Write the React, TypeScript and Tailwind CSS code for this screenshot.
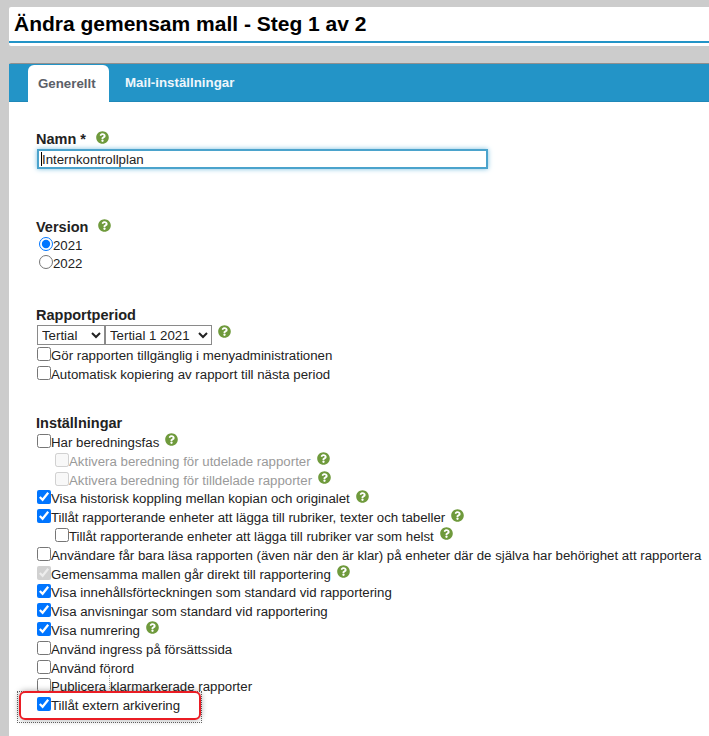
import React from "react";
import { FaQuestionCircle } from "react-icons/fa";

const Help = ({ className = "" }: { className?: string }) => (
  <FaQuestionCircle className={`inline-block text-[#6f9a3c] w-[13px] h-[13px] shrink-0 ${className}`} />
);

type RowProps = {
  label: string;
  checked?: boolean;
  disabled?: boolean;
  muted?: boolean;
  indent?: boolean;
  help?: boolean;
  raised?: boolean;
};

const Row = ({ label, checked, disabled, muted, indent, help, raised }: RowProps) => (
  <label
    className={`flex items-center h-[18.8px] whitespace-nowrap ${indent ? "pl-[18px]" : ""} ${raised ? "relative z-10" : ""}`}
  >
    <input
      type="checkbox"
      defaultChecked={checked}
      disabled={disabled}
      className="m-0 ml-[1px] w-[14px] h-[14px] shrink-0 -translate-y-[2px]"
    />
    <span className={muted ? "text-[#9a9a9a]" : ""}>{label}</span>
    {help && <Help className="ml-[6px] -translate-y-[3px]" />}
  </label>
);

const Heading = ({ children, help }: { children: React.ReactNode; help?: boolean }) => (
  <div className="flex items-center h-[18px] font-bold text-[14.5px] text-[#222]">
    <span>{children}</span>
    {help && <Help className="ml-[10px] -translate-y-[3px]" />}
  </div>
);

export default function App() {
  return (
    <div className="relative w-[709px] h-[736px] overflow-hidden bg-[#cccccc] pl-[9px] pt-[7px] font-['Liberation_Sans',Arial,sans-serif] text-[13.26px] text-[#222]">
      <header className="h-[39px] bg-white rounded-l-[2px] pt-[2px]">
        <h1 className="h-[32px] pl-[5px] text-[21px] leading-[30px] font-bold text-black">
          Ändra gemensam mall - Steg 1 av 2
        </h1>
        <div className="h-[2px] bg-[#2394c7]" />
      </header>

      <main className="mt-[17px] h-[680px] bg-white rounded-tl-[2px] border-t border-[#8f8f8f]">
        <nav className="flex h-[38px] bg-[#2394c7] pl-[19px] pt-[1px] border-b border-[#1f88b8]">
          <div className="w-[81px] h-[37px] bg-white rounded-t-[6px] text-[#5b6068] flex items-center pl-[10px] font-bold text-[13.3px]">
            Generellt
          </div>
          <div className="ml-[16px] h-[36px] flex items-center font-bold text-[13.3px] text-[#eef6fb]">
            Mail-inställningar
          </div>
        </nav>

        <section className="pl-[27px] pt-[29px]">
          <Heading help>Namn *</Heading>
          <div className="relative w-[451px] h-[20px] ml-[1px]">
            <input
              readOnly
              value="Internkontrollplan"
              className="w-full h-full pl-[3px] border-2 border-[#4ba3cc] bg-white text-[#222] shadow-[0_0_5px_#7cc0e0] outline-none text-[13.26px]"
            />
            <span className="absolute left-[4px] top-[3px] w-[1px] h-[14px] bg-black" />
          </div>

          <div className="mt-[50px]">
            <Heading help>Version</Heading>
          </div>
          <div className="flex flex-col">
            <label className="flex items-center h-[18px]">
              <input type="radio" name="version" defaultChecked className="m-0 ml-[3px] w-[14px] h-[14px] -translate-y-[2px]" />
              <span>2021</span>
            </label>
            <label className="flex items-center h-[18px]">
              <input type="radio" name="version" className="m-0 ml-[3px] w-[14px] h-[14px] -translate-y-[2px]" />
              <span>2022</span>
            </label>
          </div>

          <div className="mt-[34px]">
            <Heading>Rapportperiod</Heading>
          </div>
          <div className="flex items-center h-[20px] mb-[2px] pl-[1px]">
            <select defaultValue="Tertial" className="w-[68px] h-[20px] border border-[#8a8a8a] bg-white text-[13.26px]">
              <option>Tertial</option>
            </select>
            <select defaultValue="Tertial 1 2021" className="w-[107px] h-[20px] border border-[#8a8a8a] bg-white text-[13.26px]">
              <option>Tertial 1 2021</option>
            </select>
            <Help className="ml-[6px] -translate-y-[4px]" />
          </div>
          <Row label="Gör rapporten tillgänglig i menyadministrationen" />
          <Row label="Automatisk kopiering av rapport till nästa period" />

          <div className="mt-[30px] mb-[1px]">
            <Heading>Inställningar</Heading>
          </div>
          <Row label="Har beredningsfas" help />
          <Row label="Aktivera beredning för utdelade rapporter" indent disabled muted help />
          <Row label="Aktivera beredning för tilldelade rapporter" indent disabled muted help />
          <Row label="Visa historisk koppling mellan kopian och originalet" checked help />
          <Row label="Tillåt rapporterande enheter att lägga till rubriker, texter och tabeller" checked help />
          <Row label="Tillåt rapporterande enheter att lägga till rubriker var som helst" indent help />
          <Row label="Användare får bara läsa rapporten (även när den är klar) på enheter där de själva har behörighet att rapportera" />
          <Row label="Gemensamma mallen går direkt till rapportering" checked disabled help />
          <Row label="Visa innehållsförteckningen som standard vid rapportering" checked />
          <Row label="Visa anvisningar som standard vid rapportering" checked />
          <Row label="Visa numrering" checked help />
          <Row label="Använd ingress på försättssida" />
          <Row label="Använd förord" />
          <Row label="Publicera klarmarkerade rapporter" />
          <Row label="Tillåt extern arkivering" checked raised />
        </section>
      </main>

      {/* annotation pasted over the screenshot: it hides the bottom of the row above */}
      <div className="absolute left-[17px] top-[691px] w-[185px] h-[32px] bg-white border border-dotted border-[#666]" />
      <div className="absolute left-[19px] top-[691px] w-[182px] h-[29px] rounded-[6px] border-[2.5px] border-[#ea1c24] shadow-[0_0_6px_rgba(0,0,0,0.35)]" />
      <div className="absolute left-[109px] top-[675px] h-[14px] border-l border-dotted border-[#999]" />
    </div>
  );
}
